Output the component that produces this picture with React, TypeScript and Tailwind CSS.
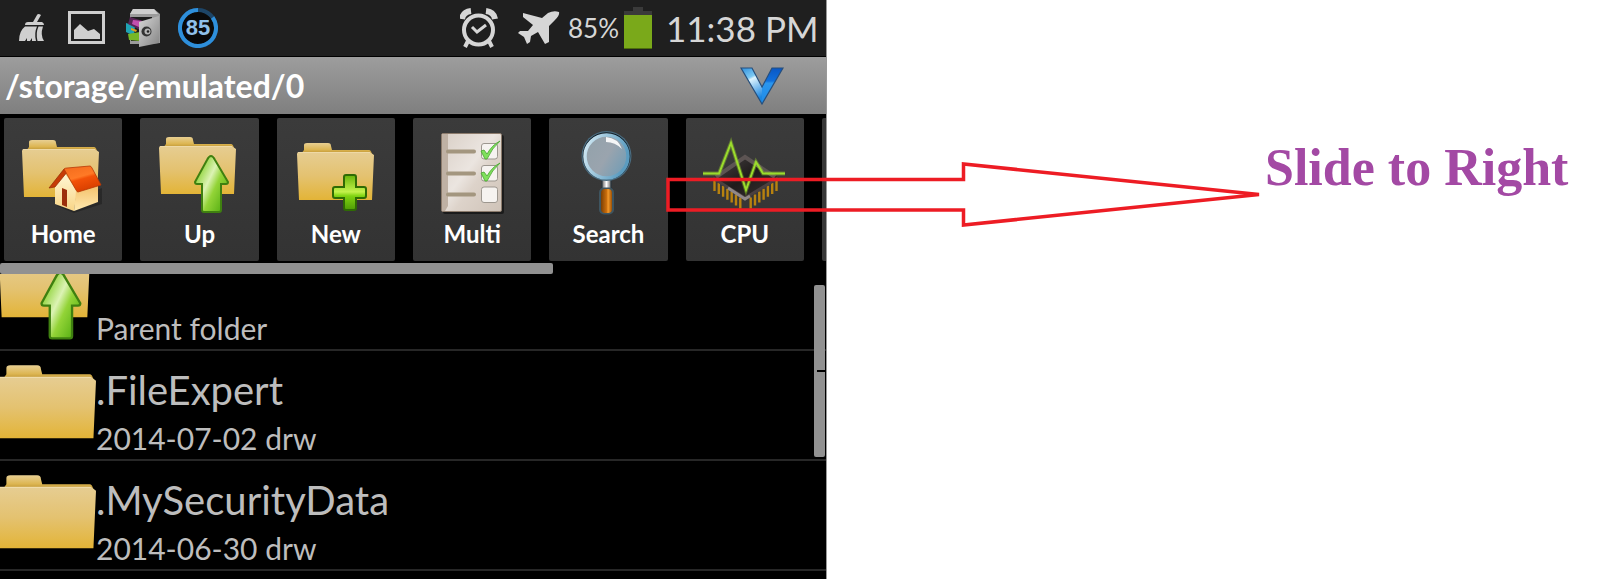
import type { ReactNode } from "react";

function Gradients() {
  return (
    <svg className="absolute h-0 w-0" aria-hidden="true">
      <defs>
        <linearGradient id="folderFront" x1="0" y1="0" x2="0" y2="1">
          <stop offset="0" stopColor="#e6cd92" />
          <stop offset="0.5" stopColor="#e4c270" />
          <stop offset="1" stopColor="#e3b437" />
        </linearGradient>
        <linearGradient id="folderBack" x1="0" y1="0" x2="0" y2="1">
          <stop offset="0" stopColor="#e8cf92" />
          <stop offset="0.6" stopColor="#ddb653" />
          <stop offset="1" stopColor="#b98f2c" />
        </linearGradient>
        <linearGradient id="arrowGreen" x1="0" y1="0.1" x2="1" y2="0.9">
          <stop offset="0.15" stopColor="#8fd33a" />
          <stop offset="0.42" stopColor="#dcf3b4" />
          <stop offset="0.6" stopColor="#93d437" />
          <stop offset="1" stopColor="#4aa80c" />
        </linearGradient>
        <linearGradient id="plusGreen" x1="0" y1="0" x2="0" y2="1">
          <stop offset="0" stopColor="#66b408" />
          <stop offset="0.48" stopColor="#c4f24c" />
          <stop offset="0.6" stopColor="#7fd311" />
          <stop offset="1" stopColor="#4f9d06" />
        </linearGradient>
        <linearGradient id="roof" x1="0" y1="0" x2="0.4" y2="1">
          <stop offset="0" stopColor="#f26a1c" />
          <stop offset="0.5" stopColor="#ff7a26" />
          <stop offset="0.6" stopColor="#f35208" />
          <stop offset="1" stopColor="#d94000" />
        </linearGradient>
        <linearGradient id="wall" x1="0" y1="0" x2="0" y2="1">
          <stop offset="0" stopColor="#fff8d8" />
          <stop offset="1" stopColor="#f9d586" />
        </linearGradient>
        <linearGradient id="sideWall" x1="0" y1="0" x2="0" y2="1">
          <stop offset="0" stopColor="#f3c06a" />
          <stop offset="1" stopColor="#ffeab0" />
        </linearGradient>
        <linearGradient id="paper" x1="0" y1="0" x2="1" y2="1">
          <stop offset="0" stopColor="#d9cfc6" />
          <stop offset="0.45" stopColor="#ebe5e0" />
          <stop offset="0.6" stopColor="#ddd3ca" />
          <stop offset="1" stopColor="#cfc3b8" />
        </linearGradient>
        <linearGradient id="lens" x1="0" y1="0.2" x2="1" y2="0.8">
          <stop offset="0" stopColor="#93a2ab" />
          <stop offset="0.5" stopColor="#9aa4ae" />
          <stop offset="1" stopColor="#6f9cb6" />
        </linearGradient>
        <linearGradient id="rim" x1="0" y1="0" x2="1" y2="0.3">
          <stop offset="0" stopColor="#d5ebf5" />
          <stop offset="1" stopColor="#5b9cc0" />
        </linearGradient>
        <linearGradient id="grip" x1="0" y1="0" x2="1" y2="0">
          <stop offset="0" stopColor="#7c3f03" />
          <stop offset="0.5" stopColor="#c86d0d" />
          <stop offset="0.65" stopColor="#f39a2b" />
          <stop offset="1" stopColor="#9a4f05" />
        </linearGradient>
        <linearGradient id="steel" x1="0" y1="0" x2="1" y2="0">
          <stop offset="0" stopColor="#777777" />
          <stop offset="0.5" stopColor="#ffffff" />
          <stop offset="1" stopColor="#777777" />
        </linearGradient>
        <linearGradient id="chip" x1="0" y1="0" x2="1" y2="1">
          <stop offset="0" stopColor="#4d4848" />
          <stop offset="0.5" stopColor="#1f1b1b" />
          <stop offset="1" stopColor="#3c3433" />
        </linearGradient>
        <linearGradient id="door" x1="0" y1="0" x2="1" y2="1">
          <stop offset="0" stopColor="#d6d6d6" />
          <stop offset="1" stopColor="#858585" />
        </linearGradient>
        <linearGradient id="chevronLeft" x1="0" y1="0" x2="0.3" y2="1">
          <stop offset="0" stopColor="#2f8fdc" />
          <stop offset="0.35" stopColor="#7cc9f3" />
          <stop offset="0.42" stopColor="#dff4fd" />
          <stop offset="1" stopColor="#1b86e0" />
        </linearGradient>
        <linearGradient id="chevronRight" x1="0" y1="0" x2="0" y2="1">
          <stop offset="0" stopColor="#0a57c4" />
          <stop offset="0.36" stopColor="#0f6fdc" />
          <stop offset="0.42" stopColor="#2b96ee" />
          <stop offset="1" stopColor="#1f8be6" />
        </linearGradient>
      </defs>
    </svg>
  );
}

function FolderShape() {
  return (
    <>
      <path d="M4 11 L7 7 V2 Q7 0 10 0 H31 Q34 0 34 3 L35 7 H72 Q74 7 75 11 Z" fill="url(#folderBack)" />
      <path d="M0 11 Q0 9 2 9 H73 Q74 10 77 12 L75 57 H2 Z" fill="url(#folderFront)" />
      <path d="M1 9.500 H73" stroke="#f0dcab" strokeWidth="0.8" />
    </>
  );
}

function ArrowShape() {
  return (
    <path
      d="M71 38 Q73 38 75 42 L88 64 Q88 66 86 66 H81 V92 Q81 94 79 94 H64 Q62 94 62 92 V66 H57 Q55 66 55 64 L67 42 Q69 38 71 38 Z"
      fill="url(#arrowGreen)"
      stroke="#3f8010"
      strokeWidth="2"
    />
  );
}

function TileSvg({ children }: { children: ReactNode }) {
  return (
    <svg viewBox="0 0 118 104" className="h-[104px] w-[118px] shrink-0" fill="none" aria-hidden="true">
      {children}
    </svg>
  );
}

const homeIcon = (
  <TileSvg>
    <g transform="translate(18 22)"><FolderShape /></g>
    <path d="M53 88 L70 95 L98 86 L98 70 Z" fill="#000" opacity="0.25" />
    <path d="M60 54 L73 73 L70 93 L51 86 V67 Z" fill="url(#wall)" />
    <path d="M72 73 L94 67 V84 L70 93 Z" fill="url(#sideWall)" />
    <path d="M58 70 L63 72 V89 L58 87 Z" fill="#9c2f0c" />
    <path d="M45 70 L60 51 L64 53 L51 69 Z" fill="#c63c07" stroke="#8f2a05" strokeWidth="0.7" />
    <path d="M60 51 Q61 50 63 50 L86 48 Q87 48 88 50 L97 67 L74 74 Q73 74 72 72 Z" fill="url(#roof)" stroke="#b83806" strokeWidth="0.8" />
  </TileSvg>
);

const upIcon = (
  <TileSvg>
    <g transform="translate(19 19)"><FolderShape /></g>
    <ArrowShape />
  </TileSvg>
);

const newIcon = (
  <TileSvg>
    <g transform="translate(20 25)"><FolderShape /></g>
    <path
      d="M69 57 H77 Q79 57 79 59 V69 H87 Q89 69 89 71 V78 Q89 80 87 80 H79 V90 Q79 92 77 92 H69 Q67 92 67 90 V80 H58 Q56 80 56 78 V71 Q56 69 58 69 H67 V59 Q67 57 69 57 Z"
      fill="url(#plusGreen)"
      stroke="#2f6b04"
      strokeWidth="2"
    />
  </TileSvg>
);

const multiIcon = (
  <TileSvg>
    <rect x="30" y="17" width="61" height="79" rx="2" fill="#000" opacity="0.5" />
    <rect x="28.500" y="15.500" width="60" height="78" rx="1.500" fill="url(#paper)" stroke="#8c7b6c" />
    <path d="M29 16 H35 V88 L32 93 H29 Z" fill="#bfb1a4" />
    <path d="M35 33.500 H61 M35 55.500 H61 M35 76.500 H61" stroke="#a3967f" strokeWidth="4" strokeLinecap="round" />
    {[25.5, 47.5, 69].map((y) => (
      <rect key={y} x="68.500" y={y} width="16" height="15.500" rx="2.500" fill="#f6f3f0" stroke="#9d978f" />
    ))}
    {[0, 22].map((dy) => (
      <path
        key={dy}
        transform={`translate(0 ${dy})`}
        d="M68 33 L71 32 L74 36 Q79 27 87 23 Q79 30 74 41 L72 41 Z"
        fill="#7fe05c"
        stroke="#45a52c"
        strokeWidth="0.8"
      />
    ))}
  </TileSvg>
);

const searchIcon = (
  <TileSvg>
    <rect x="52.500" y="60" width="10" height="14" fill="#24333d" />
    <rect x="53.500" y="61" width="8" height="12" fill="url(#steel)" />
    <rect x="50" y="69.500" width="15" height="27" rx="5" fill="#3e5561" />
    <rect x="52" y="71" width="11" height="24" rx="4" fill="url(#grip)" />
    <circle cx="57.500" cy="38" r="25" fill="#4a6c80" />
    <circle cx="57.500" cy="38" r="23.800" fill="#101c24" />
    <circle cx="57.500" cy="38.500" r="21.500" fill="url(#lens)" stroke="url(#rim)" strokeWidth="3.500" />
    <path d="M57 19 Q69 20 73 31 Q66 24 57 24 Z" fill="#fff" opacity="0.9" />
  </TileSvg>
);

const cpuIcon = (
  <TileSvg>
    {[0, 1, 2, 3, 4, 5, 6].map((i) => (
      <path
        key={i}
        d={`M${28.5 + i * 4.3} ${62 + i * 2.9} v11 M${90.5 - i * 4.3} ${62 + i * 2.9} v11`}
        stroke="#b8820f"
        strokeWidth="2.400"
      />
    ))}
    <path d="M26 60 L59 37 L93 60 L59 82 Z" fill="url(#chip)" />
    <path d="M30 59 L59 39 L89 59" stroke="#5c5453" strokeWidth="4" />
    <path d="M27 60 L59 80 L92 60" stroke="#4a4040" strokeWidth="3" />
    <path d="M42 70 L59 81 L64 78" stroke="#918888" strokeWidth="3" />
    <path d="M17 55.500 H33 L45 25 L60 72 L70 44 L77 55.500 H99" stroke="#a5e82c" strokeOpacity="0.35" strokeWidth="4" />
    <path d="M17 55.500 H33 L45 25 L60 72 L70 44 L77 55.500 H99" stroke="#9bdc2c" strokeWidth="2" />
  </TileSvg>
);

const tools = [
  { label: "Home", icon: homeIcon },
  { label: "Up", icon: upIcon },
  { label: "New", icon: newIcon },
  { label: "Multi", icon: multiIcon },
  { label: "Search", icon: searchIcon },
  { label: "CPU", icon: cpuIcon },
];

function StatusBar() {
  return (
    <div className="flex h-[57px] shrink-0 items-center justify-between border-b border-black bg-[#1f1f1f] pr-[10px] pl-[18px] text-[#d6d6d6]">
      <div className="flex items-center">
        <svg viewBox="0 0 30 38" className="mr-5 h-[38px] w-[30px]" fill="#cfcfcf" aria-hidden="true">
          <path d="M19 6 Q20 4 23 6 L19 13 L24 13 Q26 14 26 16 L7 16 Q7 13 10 13 L15 13 Z" />
          <path d="M7 17.500 H19 Q16 24 18 32 H14 L14 29 L12 32 H9 L9 29 L7 32 H1 Q1 22 7 17.500 Z" />
          <path d="M20.500 17.500 H25 Q22 26 26 32 H19.500 Q17.500 24 20.500 17.500 Z" />
        </svg>
        <svg viewBox="0 0 38 38" className="mr-5 h-[38px] w-[38px]" fill="none" aria-hidden="true">
          <rect x="1.500" y="3.500" width="34" height="30" stroke="#cfcfcf" strokeWidth="3" />
          <path d="M6 21 L12 15 L20 22 L26 20 L32 25 V30 H6 Z" fill="#cfcfcf" />
        </svg>
        <svg viewBox="0 0 34 38" className="mr-4 h-[38px] w-[34px]" aria-hidden="true">
          <path d="M7 0 H28 L34 5 V34 L22 35 H4 V5 Z" fill="#9b9b9b" />
          <path d="M7 0 H28 L32 5 H4 Z" fill="#cecece" />
          <path d="M5 8 H26 V32 H5 Z" fill="#1c1c1c" />
          <path d="M0 14 L9 17 L8 27 L0 23 Z" fill="#1fa3b4" />
          <path d="M2 25 L14 23 L14 32 L3 31 Z" fill="#76b726" />
          <path d="M4 8 L17 12 L14 21 L2 15 Z" fill="#5a2457" />
          <path d="M7 11 L16 12 L13 18 L6 15 Z" fill="#c24fae" />
          <path d="M5 19 L11 21 L10 23 L5 21 Z" fill="#e0a21f" />
          <path d="M13 13 L33 7 V34 L13 38 Z" fill="url(#door)" />
          <circle cx="20.500" cy="22.500" r="5" fill="#333" />
          <circle cx="21.500" cy="22.500" r="3" fill="#b5b5b5" />
          <circle cx="22" cy="22.500" r="1.300" fill="#222" />
        </svg>
        <div className="grid h-10 w-11 place-items-center">
          <svg viewBox="0 0 40 40" className="col-start-1 row-start-1 h-10 w-10" fill="none" aria-hidden="true">
            <circle cx="20" cy="20" r="18" fill="#0a0a0a" stroke="#1d4567" strokeWidth="4" />
            <path d="M34.600 9.500 A18 18 0 1 1 20 2" stroke="#2e8fdb" strokeWidth="4" />
          </svg>
          <span className="col-start-1 row-start-1 font-['Liberation_Sans',sans-serif] text-[22px] leading-6 font-bold text-[#8fc0ea]">85</span>
        </div>
      </div>
      <div className="flex items-center">
        <svg viewBox="0 0 38 40" className="mr-5 h-10 w-[38px]" fill="none" stroke="#d6d6d6" aria-hidden="true">
          <circle cx="18.500" cy="22" r="14.500" strokeWidth="4" />
          <path d="M12 19 L17 24 L26 17" strokeWidth="3" />
          <path d="M2 11 Q3 4 11 3 M26 3 Q34 4 35 11" strokeWidth="6" />
          <path d="M8 33 L5 39 M29 33 L32 39" strokeWidth="4" />
        </svg>
        <svg viewBox="0 0 42 34" className="mr-2 h-[34px] w-[42px]" fill="#d6d6d6" aria-hidden="true">
          <path d="M41 1 Q42 4 37 9 L31 15 L31 31 L27 33 L20 21 L13 25 L12 31 L9 33 L6 26 L0 22 L2 20 L10 20 L15 14 L5 6 L5 2 L24 7 L30 2 Q36 -1 41 1 Z" />
        </svg>
        <span className="w-[50px] text-[26px] whitespace-nowrap">85%</span>
        <svg viewBox="0 0 28 42" className="mr-3.5 ml-1.5 h-[42px] w-7" aria-hidden="true">
          <path d="M9 0 H19 V4 H28 V8 H0 V4 H9 Z" fill="#3a3a3a" />
          <rect y="8" width="28" height="34" fill="#7aa91a" />
          <rect y="41" width="28" height="1" fill="#4d6e0c" />
        </svg>
        <span className="w-[150px] text-right text-[35px] whitespace-nowrap">11:38 PM</span>
      </div>
    </div>
  );
}

function FileRow({ name, detail, icon }: { name?: string; detail: string; icon: ReactNode }) {
  return (
    <li className="h-[110px] shrink-0 border-b-2 border-[#272727]">
      <button type="button" className="flex h-full w-full text-left text-[#bdbdbd]">
        <span className="w-24 shrink-0 overflow-hidden">{icon}</span>
        <span className="flex h-full flex-col justify-end">
          {name && <span className="text-[40px] leading-[54px]">{name}</span>}
          <span className="text-[30px] leading-[42px]">{detail}</span>
        </span>
      </button>
    </li>
  );
}

const rowFolder = (
  <svg viewBox="2 -11 75 84" className="h-[108px] w-24" fill="none" aria-hidden="true">
    <FolderShape />
  </svg>
);

const rowUp = (
  <svg viewBox="20 11 81 92" className="h-[108px] w-24" fill="none" aria-hidden="true">
    <g transform="translate(19 19)"><FolderShape /></g>
    <ArrowShape />
  </svg>
);

export default function App() {
  return (
    <div className="relative flex min-h-screen bg-white font-[Lato,'Open_Sans',sans-serif]">
      <Gradients />
      <main className="flex w-[827px] flex-col overflow-hidden border-r border-[#999999] bg-black">
        <StatusBar />
        <header className="flex h-[58px] shrink-0 items-center justify-between border-b border-black bg-linear-to-b from-[#9d9d9d] to-[#7f7f7f] pr-[42px] pl-[5px]">
          <h1 className="text-[32px] leading-10 font-bold text-white">/storage/emulated/0</h1>
          <button type="button" aria-label="Show menu">
            <svg viewBox="0 0 44 38" className="h-[38px] w-11" aria-hidden="true">
              <path d="M1 1 H12 L22 20 V37 Z" fill="url(#chevronLeft)" />
              <path d="M43 1 H32 L22 20 V37 Z" fill="url(#chevronRight)" />
              <path d="M1 1 H12 L22 20 L32 1 H43 L22 37 Z" fill="none" stroke="#274f7c" strokeWidth="1.200" />
            </svg>
          </button>
        </header>
        <nav className="shrink-0 pt-[3px]">
          <div className="flex gap-[18px] pl-1">
            <div className="grid flex-1 grid-cols-6 gap-[18px]">
              {tools.map((tool) => (
                <button
                  key={tool.label}
                  type="button"
                  className="flex h-[143px] flex-col items-center overflow-hidden rounded-xs bg-linear-to-b from-[#3b3b3b] to-[#333333] text-2xl leading-6 font-bold text-white"
                >
                  {tool.icon}
                  {tool.label}
                </button>
              ))}
            </div>
            <div className="w-1 rounded-l-xs bg-[#373737]" />
          </div>
          <div className="mt-[2px] h-[11px] w-[67%] rounded-xs bg-[#919191]" />
        </nav>
        <div className="relative flex-1 overflow-hidden">
          <ul className="-mt-[33px] flex flex-col">
            <FileRow detail="Parent folder" icon={rowUp} />
            <FileRow name=".FileExpert" detail="2014-07-02 drw" icon={rowFolder} />
            <FileRow name=".MySecurityData" detail="2014-06-30 drw" icon={rowFolder} />
          </ul>
          <div className="absolute top-[11px] right-px flex h-[172px] w-[11px] items-center justify-end rounded-xs bg-[#919191]">
            <div className="h-[2px] w-2 bg-black" />
          </div>
        </div>
      </main>
      <aside className="flex-1 pt-[138px] pl-[438px]">
        <p className="font-['Liberation_Serif',serif] text-[52px] leading-[60px] font-bold whitespace-nowrap text-[#a349a4]">Slide to Right</p>
      </aside>
      <svg viewBox="0 0 600 70" className="pointer-events-none absolute top-[160px] left-[664px] h-[70px] w-[600px]" fill="none" aria-hidden="true">
        <path d="M4 19.500 H299.500 V4 L595 34.500 L299.500 65 V50 H4 Z" stroke="#ed1c24" strokeWidth="3.500" />
      </svg>
    </div>
  );
}
